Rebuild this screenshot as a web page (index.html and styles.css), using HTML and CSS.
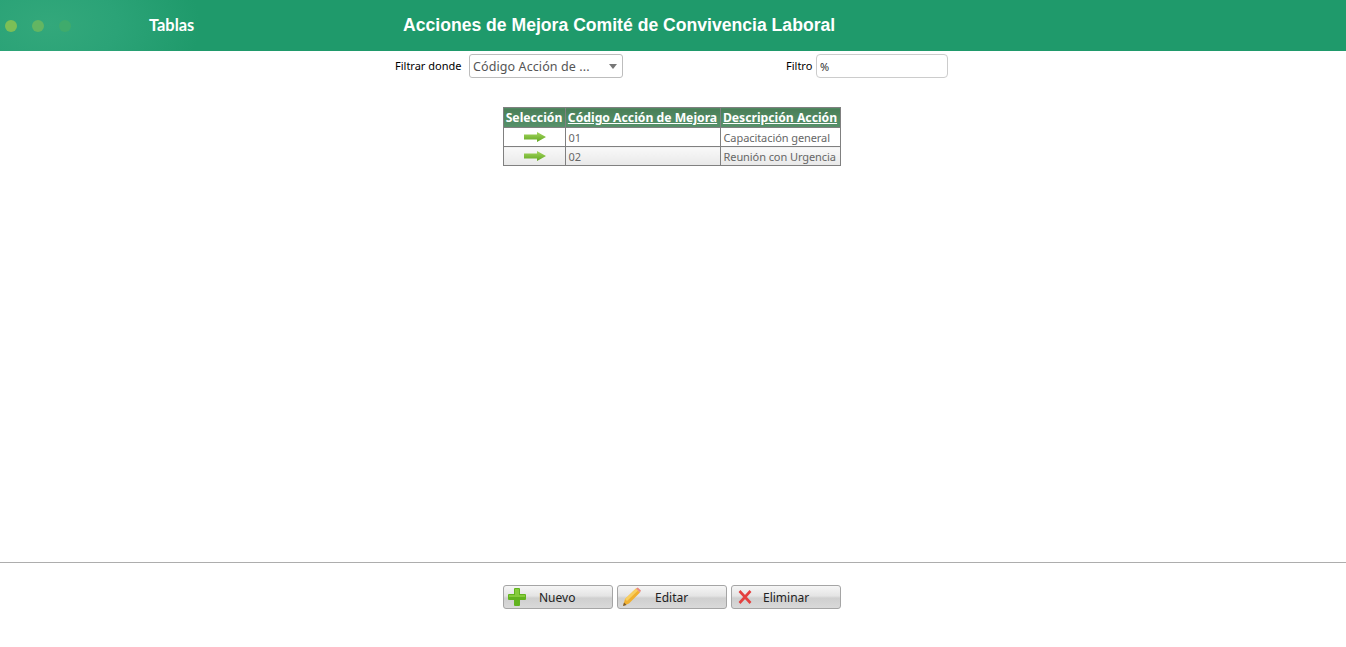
FILE: index.html
```html
<!DOCTYPE html>
<html lang="es">
<head>
<meta charset="utf-8">
<title>Acciones de Mejora</title>
<link rel="stylesheet" href="styles.css">
</head>
<body>
<div class="page">
  <header class="topbar">
    <div class="brand">
      <span class="dot dot-1"></span><span class="dot dot-2"></span><span class="dot dot-3"></span>
      <span class="brand-name">Tablas</span>
    </div>
    <h1 class="title">Acciones de Mejora Comité de Convivencia Laboral</h1>
  </header>

  <div class="filters">
    <label class="flabel flabel-where">Filtrar donde</label>
    <div class="select"><span>Código Acción de ...</span><i class="caret"></i></div>
    <label class="flabel flabel-filter">Filtro</label>
    <div class="input">%</div>
  </div>

  <main class="content">
    <table class="grid">
      <thead>
        <tr>
          <th class="col-sel">Selección</th>
          <th class="col-code"><a href="#">Código Acción de Mejora</a></th>
          <th class="col-desc"><a href="#">Descripción Acción</a></th>
        </tr>
      </thead>
      <tbody>
        <tr>
          <td class="sel"><svg class="arrow" width="22" height="10" viewBox="0 0 22 10"><defs><linearGradient id="ag" x1="0" y1="0" x2="0" y2="1"><stop offset="0" stop-color="#a4d65e"/><stop offset="1" stop-color="#62a821"/></linearGradient></defs><path d="M0 2.5H13V0L22 5L13 10V7.5H0Z" fill="url(#ag)"/></svg></td>
          <td>01</td>
          <td>Capacitación general</td>
        </tr>
        <tr class="alt">
          <td class="sel"><svg class="arrow" width="22" height="10" viewBox="0 0 22 10"><path d="M0 2.5H13V0L22 5L13 10V7.5H0Z" fill="url(#ag)"/></svg></td>
          <td>02</td>
          <td>Reunión con Urgencia</td>
        </tr>
      </tbody>
    </table>
  </main>

  <footer class="actions">
    <button class="btn" type="button">
      <svg class="ico ico-new" width="20" height="20" viewBox="0 0 20 20"><path d="M7 2Q7 1 8 1H12Q13 1 13 2V7H18Q19 7 19 8V12Q19 13 18 13H13V18Q13 19 12 19H8Q7 19 7 18V13H2Q1 13 1 12V8Q1 7 2 7H7Z" fill="#62b31f"/><path d="M8 2H12V8H18V10H2V8H8Z" fill="#86cb3c"/></svg>
      <span class="lbl lbl-new">Nuevo</span>
    </button>
    <button class="btn" type="button">
      <svg class="ico" width="20" height="20" viewBox="0 0 20 20"><path d="M1 19L3 12L14 1.5L18 5.5L7 16.5Z" fill="#f0b030"/><path d="M3 12L14 1.5L16 3.5L5 14Z" fill="#f8cf60"/><path d="M14 1.5L15.8 0.5L19 3.6L18 5.5Z" fill="#e98a80"/><path d="M1 19L2 15.4L4.6 18Z" fill="#7a5a30"/></svg>
      <span class="lbl lbl-edit">Editar</span>
    </button>
    <button class="btn" type="button">
      <svg class="ico ico-del" width="16" height="16" viewBox="0 0 16 16"><path d="M2.5 2L13.5 14M13.5 2L2.5 14" stroke="#e4403f" stroke-width="2.6"/></svg>
      <span class="lbl lbl-del">Eliminar</span>
    </button>
  </footer>
</div>
</body>
</html>
```

FILE: styles.css
```css
* { box-sizing: border-box; }
html, body { margin: 0; padding: 0; background: #fff; }
body { font-family: "Noto Sans", "Open Sans", sans-serif; font-size: 11px; color: #111; }
.page { height: 647px; display: flex; flex-direction: column; overflow: hidden; }

.topbar {
  height: 51px; flex: none; display: flex; align-items: center;
  background: radial-gradient(ellipse 150px 90px at 50px 25px, #33a87b 0%, #2ba377 45%, #1f9a6b 100%);
  background-color: #1f9a6b;
}
.brand { width: 403px; flex: none; display: flex; align-items: center; padding-left: 5px; }
.dot { width: 12px; height: 12px; border-radius: 50%; margin-right: 15px; }
.dot-1 { background: #7cbf56; }
.dot-2 { background: #63b662; }
.dot-3 { background: #3fab6c; }
.brand-name { margin: -3px 0 0 63px; color: #fff; font: 700 16.4px "Lato", sans-serif; }
.title { margin: 0; color: #fff; font: 700 17.6px "Liberation Sans", Arial, sans-serif; white-space: nowrap; }

.filters { height: 30px; flex: none; display: flex; align-items: center; padding: 0 0 0 395px; }
.flabel { font-size: 11px; line-height: 16px; color: #000; }
.flabel-where { width: 74px; white-space: nowrap; }
.select {
  width: 154px; height: 24px; display: flex; align-items: center; justify-content: space-between;
  border: 1px solid #bdbdbd; border-radius: 3px; padding: 0 5px 0 3px;
  font-size: 12.5px; color: #555; letter-spacing: .1px; white-space: nowrap;
}
.caret { width: 0; height: 0; border-left: 4.5px solid transparent; border-right: 4.5px solid transparent; border-top: 5px solid #777; }
.flabel-filter { margin-left: 163px; width: 30px; }
.input {
  width: 132px; height: 24px; border: 1px solid #ccc; border-radius: 4px; padding: 0 3px;
  line-height: 24px; font-size: 11px; color: #333;
}

.content { flex: 1; padding-top: 26px; display: flex; justify-content: center; }
.grid { border-collapse: collapse; width: 337px; table-layout: fixed; align-self: flex-start; margin-left: -3px; }
.grid th, .grid td { border: 1px solid #808080; white-space: nowrap; overflow: hidden; }
.grid th {
  height: 20px; padding: 1px 0 0; background: linear-gradient(#4a7f58, #56916a); color: #fff;
  font: 700 12.2px/16px "Noto Sans", sans-serif; text-align: center;
}
.grid th a { color: #fff; }
.col-sel { width: 62px; }
.col-code { width: 155px; }
.col-desc { width: 120px; }
.grid td { height: 19px; padding: 1px 2px 0 3px; font-size: 11px; letter-spacing: -.08px; color: #666; line-height: 16px; }
.grid td.sel { text-align: center; padding: 0 2px; }
.arrow { display: block; margin: 0 auto; position: relative; left: 1px; }
.alt td { background: linear-gradient(#f9f9f9, #e8e8e8); }

.actions {
  height: 85px; flex: none; border-top: 1px solid #adadad; display: flex; justify-content: center;
  gap: 4px; padding-top: 22px; margin-top: 0;
}
.btn {
  width: 110px; height: 24px; padding: 0 0 0 4px; display: flex; align-items: center;
  border: 1px solid #a5a5a5; border-radius: 3px; font: 12px "Noto Sans", sans-serif; color: #222;
  background: linear-gradient(#f6f6f6 0%, #e4e4e4 45%, #cfcfcf 55%, #d9d9d9 100%);
}
.btn:first-child { margin-left: -2px; }
.lbl { line-height: 16px; padding-top: 1px; }
.lbl-new { margin-left: 12px; }
.lbl-edit { margin-left: 13px; }
.lbl-del { margin-left: 10px; }
.ico { flex: none; }
.ico-new { margin-left: -1px; }
.ico-del { margin-left: 1px; }
```
